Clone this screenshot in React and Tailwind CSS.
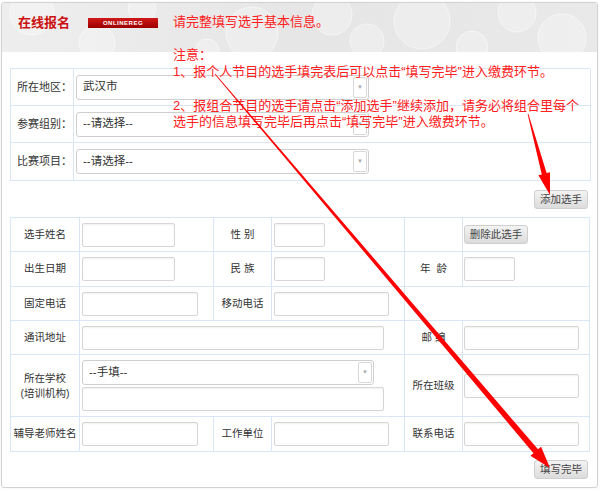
import React from "react";

const cjk = "font-['Liberation_Sans','Noto_Sans_CJK_SC',sans-serif]";
const line = "border-[#d8e6f5]";

function arrowPoints(x1, y1, x2, y2, w0, w1, headLen, headW) {
  const dx = x2 - x1;
  const dy = y2 - y1;
  const len = Math.hypot(dx, dy);
  const ux = dx / len;
  const uy = dy / len;
  const nx = -uy;
  const ny = ux;
  const bx = x2 - ux * headLen;
  const by = y2 - uy * headLen;
  const p = (x, y, s) => `${(x + nx * s).toFixed(1)},${(y + ny * s).toFixed(1)}`;
  return [
    p(x1, y1, w0 / 2),
    p(bx, by, w1 / 2),
    p(bx, by, headW / 2),
    `${x2},${y2}`,
    p(bx, by, -headW / 2),
    p(bx, by, -w1 / 2),
    p(x1, y1, -w0 / 2),
  ].join(" ");
}

function Input({ className = "" }) {
  return (
    <input
      className={`h-[24px] border border-[#d6d6d6] rounded-[2px] bg-white shadow-[inset_0_1px_2px_rgba(0,0,0,0.06)] outline-none ${className}`}
    />
  );
}

function Select({ text, className = "" }) {
  return (
    <div
      className={`h-[25px] border border-[#cfcfcf] rounded-[3px] bg-white flex items-center pl-[6px] pr-[1px] text-[11.5px] text-[#333] ${className}`}
    >
      <span>{text}</span>
      <span className="ml-auto w-[14px] h-[21px] border border-[#d8d8d8] rounded-[2px] flex items-center justify-center text-[6px] text-[#aaa]">
        ▼
      </span>
    </div>
  );
}

function Btn({ children, className = "" }) {
  return (
    <button
      className={`h-[19px] border border-[#cfcfcf] rounded-[3px] bg-gradient-to-b from-[#f3f3f3] to-[#dcdcdc] text-[10.5px] text-[#444] leading-none ${className}`}
    >
      {children}
    </button>
  );
}

function Cell({ children, className = "" }) {
  return <div className={`border-r border-b ${line} flex items-center ${className}`}>{children}</div>;
}

function Label({ children, className = "" }) {
  return (
    <Cell className={`justify-center text-[10.5px] text-[#333] ${className}`}>
      <span className="whitespace-pre">{children}</span>
    </Cell>
  );
}

function Bokeh() {
  const circles = [
    [30, 10, 22], [95, 40, 18], [140, 5, 14], [250, 30, 26], [330, 12, 20],
    [365, 38, 17], [420, 18, 28], [470, 44, 16], [515, 10, 19], [560, 35, 24], [205, 48, 12],
  ];
  return (
    <svg className="absolute inset-0" width="597" height="50">
      <defs>
        <linearGradient id="hg" x1="0" x2="1">
          <stop offset="0" stopColor="#eeeeee" />
          <stop offset="0.5" stopColor="#e6e6e6" />
          <stop offset="1" stopColor="#e9e9e9" />
        </linearGradient>
      </defs>
      <rect width="597" height="50" fill="url(#hg)" />
      {circles.map(([cx, cy, r], i) => (
        <circle key={i} cx={cx} cy={cy} r={r} fill="#ffffff" fillOpacity="0.28" stroke="#ffffff" strokeOpacity="0.5" />
      ))}
    </svg>
  );
}

export default function App() {
  return (
    <div className={`relative w-[600px] h-[490px] bg-white pt-[2px] pl-[1px] ${cjk}`}>
      <div className="w-[597px] h-[486px] border border-[#d2d2d2] rounded-[3px] shadow-[0_0_2px_rgba(0,0,0,0.08)]">
        <div className="relative h-[49px] overflow-hidden rounded-t-[3px]">
          <Bokeh />
          <div className="relative h-[40px] flex items-center pl-[16px]">
            <span className="text-[13px] font-bold text-[#cc1010]">在线报名</span>
            <span className="ml-[18px] w-[70px] h-[10px] bg-gradient-to-b from-[#d01818] to-[#9c0000] text-white text-[6px] font-bold tracking-[0.5px] flex items-center justify-center leading-none">
              ONLINEREG
            </span>
          </div>
        </div>

        <div className="pl-[8px]">
          <div className={`mt-[16px] w-[580px] border-t border-l ${line} grid grid-cols-[63px_517px] grid-rows-[37px_37px_38px]`}>
            {[
              ["所在地区：", "武汉市"],
              ["参赛组别：", "--请选择--"],
              ["比赛项目：", "--请选择--"],
            ].map(([label, val]) => (
              <React.Fragment key={label}>
                <Cell className="pl-[6px] text-[11px] text-[#333]">{label}</Cell>
                <Cell className="pl-[2px]">
                  <Select text={val} className="w-[293px]" />
                </Cell>
              </React.Fragment>
            ))}
          </div>

          <div className="w-[580px] flex justify-end pr-[2px] mt-[9px]">
            <Btn className="w-[54px]">添加选手</Btn>
          </div>

          <div
            className={`mt-[8px] w-[580px] border-t border-l ${line} grid grid-cols-[69px_134px_58px_133px_58px_127px] grid-rows-[34px_35px_34px_34px_62px_35px]`}
          >
            <Label>选手姓名</Label>
            <Cell className="pl-[2px]"><Input className="w-[93px]" /></Cell>
            <Label>性 别</Label>
            <Cell className="pl-[2px]"><Input className="w-[51px]" /></Cell>
            <Cell />
            <Cell className="pl-[1px]"><Btn className="w-[64px]">删除此选手</Btn></Cell>

            <Label>出生日期</Label>
            <Cell className="pl-[2px]"><Input className="w-[93px]" /></Cell>
            <Label>民 族</Label>
            <Cell className="pl-[2px]"><Input className="w-[51px]" /></Cell>
            <Label>年  龄</Label>
            <Cell className="pl-[1px]"><Input className="w-[51px]" /></Cell>

            <Label>固定电话</Label>
            <Cell className="pl-[2px]"><Input className="w-[116px]" /></Cell>
            <Label>移动电话</Label>
            <Cell className="pl-[2px]"><Input className="w-[115px]" /></Cell>
            <Cell className="col-span-2" />

            <Label>通讯地址</Label>
            <Cell className="col-span-3 pl-[2px]"><Input className="w-[302px]" /></Cell>
            <Label>邮 编</Label>
            <Cell className="pl-[1px]"><Input className="w-[115px]" /></Cell>

            <Cell className="justify-center text-[10.5px] text-[#333]">
              <div className="text-center leading-[15px]">
                所在学校
                <br />
                (培训机构)
              </div>
            </Cell>
            <Cell className="col-span-3 pl-[2px]">
              <div className="flex flex-col gap-[2px]">
                <Select text="--手填--" className="w-[292px] h-[24px]" />
                <Input className="w-[302px]" />
              </div>
            </Cell>
            <Label>所在班级</Label>
            <Cell className="pl-[1px]"><Input className="w-[115px]" /></Cell>

            <Label>辅导老师姓名</Label>
            <Cell className="pl-[2px]"><Input className="w-[116px]" /></Cell>
            <Label>工作单位</Label>
            <Cell className="pl-[2px]"><Input className="w-[115px]" /></Cell>
            <Label>联系电话</Label>
            <Cell className="pl-[1px]"><Input className="w-[115px]" /></Cell>
          </div>

          <div className="w-[580px] flex justify-end pr-[2px] mt-[8px]">
            <Btn className="w-[54px]">填写完毕</Btn>
          </div>
        </div>
      </div>

      <div className="absolute left-[173px] top-[14px] text-[13px] leading-[16.7px] text-[#ff2020] whitespace-nowrap">
        请完整填写选手基本信息。
        <br />
        <br />
        注意：
        <br />
        1、报个人节目的选手填完表后可以点击“填写完毕”进入缴费环节。
        <br />
        <br />
        2、报组合节目的选手请点击“添加选手”继续添加，请务必将组合里每个
        <br />
        选手的信息填写完毕后再点击“填写完毕”进入缴费环节。
      </div>

      <svg className="absolute inset-0 pointer-events-none" width="600" height="490">
        <polygon points={arrowPoints(215, 74, 550, 468, 0.8, 6, 22, 14)} fill="#ff0000" />
        <polygon points={arrowPoints(528, 114, 550, 195, 0.8, 5, 22, 12)} fill="#ff0000" />
      </svg>
    </div>
  );
}
